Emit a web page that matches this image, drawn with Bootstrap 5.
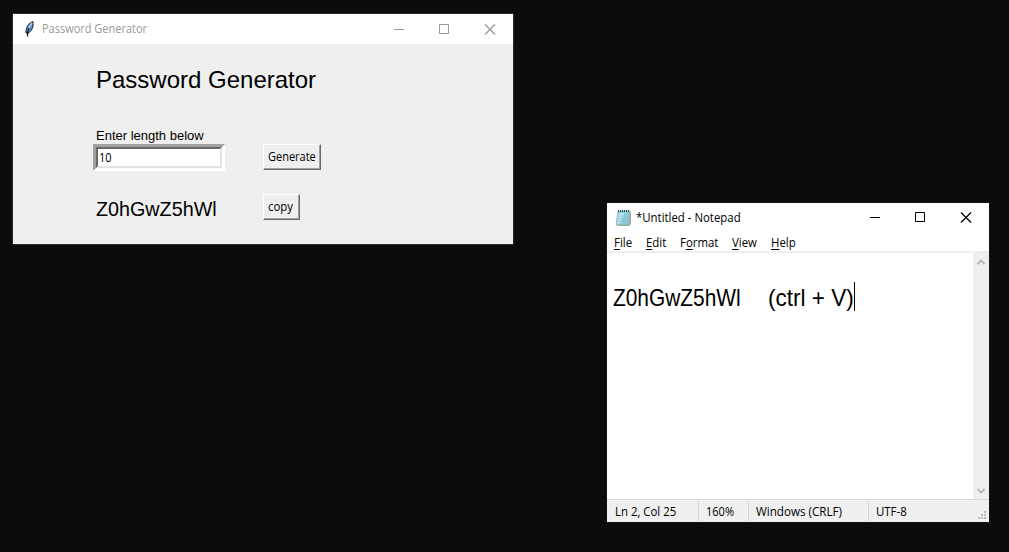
<!DOCTYPE html>
<html lang="en">
<head>
<meta charset="utf-8">
<title>Password Generator</title>
<link rel="stylesheet" href="https://cdn.jsdelivr.net/npm/bootstrap@5.3.0/dist/css/bootstrap.min.css">
<style>
  body { background: #0c0c0c; font: 12px/16px "Open Sans", "Noto Sans", sans-serif; color: #000; }
  .desktop { width: 1009px; height: 552px; }
  .window { display: flex; flex-direction: column; }
  .generator { left: 13px; top: 14px; width: 500px; height: 230px; background: #efefef; box-shadow: 0 0 0 1px #2b2b2b; }
  .notepad { left: 607px; top: 203px; width: 382px; height: 319px; background: #fff; box-shadow: 0 0 0 1px #141414; }
  .titlebar { height: 30px; background: #fff; }
  .notepad .titlebar { height: 29px; }
  .inactive { color: #999; }
  .controls svg { width: 46px; height: 29px; fill: none; stroke: currentColor; display: block; }
  .controls svg:last-child { stroke-width: 1.3; }
  .fit { display: inline-block; white-space: pre; transform-origin: 0 50%; }
  .narrow { transform: scaleX(.915); }
  .snug { transform: scaleX(.95); }
  .arial { font-family: "Liberation Sans", Arial, sans-serif; }
  .heading { font-size: 24px; line-height: 28px; margin-top: 22px; }
  .prompt { font-size: 13px; line-height: 16px; margin-top: 34px; }
  .form-grid { display: grid; grid-template-columns: 167px auto; justify-items: start; }
  .field { width: 132px; height: 27px; margin-left: -3px; border: 3px solid; border-color: #a0a0a0 #fff #fff #a0a0a0; }
  .field > div { height: 21px; border: 2px solid; border-color: #696969 #e3e3e3 #e3e3e3 #696969; background: #fff; padding-left: 1px; line-height: 17px; }
  .tkbtn { height: 26px; padding: 0 0 0 4px; background: #efefef; border: 1px solid; border-color: #fff #696969 #696969 #fff; box-shadow: inset -1px -1px #a0a0a0; color: #000; font-size: 12px; line-height: 24px; text-align: left; white-space: nowrap; }
  .result { font-size: 21px; line-height: 30px; }
  .menubar { height: 21px; padding-left: 7px; border-bottom: 2px solid #eee; }
  .menubar > span { line-height: 22px; }
  .menubar u { text-underline-offset: 2px; }
  .editor-text { font-size: 24px; line-height: 30px; padding: 30px 0 0 6px; }
  .caret { width: 1px; height: 29px; margin-top: -1px; background: #000; }
  .scroll { width: 16px; background: #efefef; }
  .scroll svg { width: 16px; height: 16px; fill: none; stroke: #b8b8b8; stroke-width: 2; display: block; }
  .status { height: 23px; background: #efefef; border-top: 1px solid #d7d7d7; }
  .status > div { border-right: 1px solid #d7d7d7; padding-left: 7px; height: 20px; margin-top: 1px; line-height: 21px; white-space: nowrap; }
  .status > div:first-child { padding-left: 8px; }
  .status > div:nth-child(4) { border: 0; }
</style>
</head>
<body>
<main class="desktop position-relative overflow-hidden">
  <section class="window generator position-absolute">
    <header class="titlebar d-flex align-items-center inactive">
      <svg class="ms-2" width="16" height="18" viewBox="0 0 16 18"><path d="M12 1.500C8 3 4.500 7 5 13L7 13.500C10.500 11 13 7 12 1.500Z" fill="#5b86c0" stroke="#1b2a42"/><path d="M11 3C9 5.500 7.500 8 7 11" fill="none" stroke="#b9d3f2" stroke-width="1.400"/><path d="M8 8Q6 12 6.500 16.500" fill="none" stroke="#111" stroke-width="1.200"/></svg>
      <span class="fit narrow" style="margin-left:5px">Password Generator</span>
      <div class="controls d-flex ms-auto">
        <svg><path d="M19 14.500h10"/></svg>
        <svg><path d="M18.500 9.500h9v9h-9z"/></svg>
        <svg><path d="M18 9.500l10 10m0-10l-10 10"/></svg>
      </div>
    </header>
    <div style="padding-left:83px">
      <div class="arial heading">Password Generator</div>
      <div class="arial prompt">Enter length below</div>
      <div class="form-grid">
        <div class="field"><div><span class="fit narrow">10</span></div></div>
        <button class="tkbtn" style="width:58px"><span class="fit narrow">Generate</span></button>
      </div>
      <div class="form-grid" style="margin-top:23px">
        <div class="arial result"><span class="fit" style="transform:scaleX(.94)">Z0hGwZ5hWl</span></div>
        <button class="tkbtn" style="width:37px"><span class="fit snug">copy</span></button>
      </div>
    </div>
  </section>

  <section class="window notepad position-absolute">
    <header class="titlebar d-flex align-items-center">
      <svg class="ms-2" width="17" height="18" viewBox="0 0 17 18"><path d="M4 3H16V15L14 17H3Z" fill="#b6a98c"/><path d="M3 2H15L14 16H1Z" fill="#8fcbd8" stroke="#7aa9b4" stroke-width=".6"/><path d="M3.500 4h6L5 15H2Z" fill="#b9e2ea"/><path d="M3.500 7h11M3 9.500h11M2.500 12h11" stroke="#79b9c8" stroke-width=".5"/><path d="M3 2h12" stroke="#38484c" stroke-width="2" stroke-dasharray="1 1"/></svg>
      <span class="fit snug" style="margin-left:4px">*Untitled - Notepad</span>
      <div class="controls d-flex ms-auto">
        <svg><path d="M19 14.500h10"/></svg>
        <svg><path d="M18.500 9.500h9v9h-9z"/></svg>
        <svg><path d="M18 9.500l10 10m0-10l-10 10"/></svg>
      </div>
    </header>
    <nav class="menubar d-flex">
      <span class="fit snug" style="width:32px"><u>F</u>ile</span>
      <span class="fit snug" style="width:34px"><u>E</u>dit</span>
      <span class="fit snug" style="width:52px">F<u>o</u>rmat</span>
      <span class="fit snug" style="width:39px"><u>V</u>iew</span>
      <span class="fit snug"><u>H</u>elp</span>
    </nav>
    <div class="d-flex flex-grow-1">
      <div class="flex-grow-1 arial editor-text d-flex align-items-start">
        <span class="fit" style="width:155px;transform:scaleX(.87)">Z0hGwZ5hWl    </span>
        <span class="fit" style="width:86px;transform:scaleX(.94)">(ctrl + V)</span>
        <span class="caret"></span>
      </div>
      <div class="scroll d-flex flex-column justify-content-between">
        <svg><path d="M4.500 11L8 7.500L11.500 11"/></svg>
        <svg><path d="M4.500 6L8 9.500L11.500 6"/></svg>
      </div>
    </div>
    <footer class="status d-flex">
      <div style="width:92px"><span class="fit snug">Ln 2, Col 25</span></div>
      <div style="width:50px"><span class="fit snug" style="transform:scaleX(.92)">160%</span></div>
      <div style="width:120px"><span class="fit snug" style="transform:scaleX(.97)">Windows (CRLF)</span></div>
      <div><span class="fit snug">UTF-8</span></div>
      <svg class="ms-auto align-self-end" width="12" height="12" fill="#bbb"><path d="M7 1h2v2H7zM4 4h2v2H4zM7 4h2v2H7zM1 7h2v2H1zM4 7h2v2H4zM7 7h2v2H7z"/></svg>
    </footer>
  </section>
</main>
<script src="https://cdn.jsdelivr.net/npm/bootstrap@5.3.0/dist/js/bootstrap.bundle.min.js"></script>
</body>
</html>
